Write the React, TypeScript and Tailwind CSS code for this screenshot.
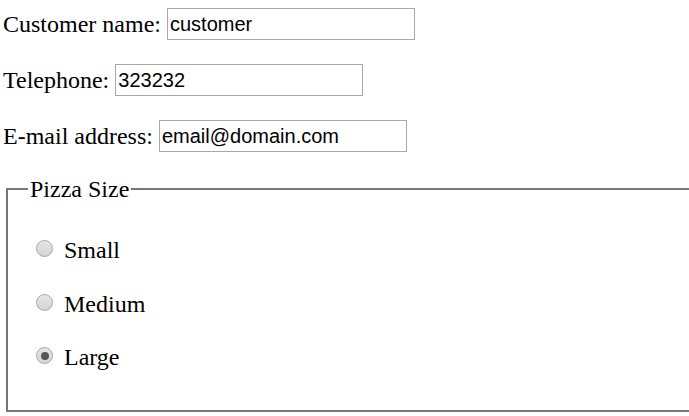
import React, {useState} from 'react'

type Size = 'Small' | 'Medium' | 'Large'

const Field: React.FC<{label: string; value: string}> = ({label, value}) => (
    <div className="flex h-8 items-center gap-[6px]">
        <span>{label}</span>
        <input
            type="text"
            defaultValue={value}
            className="h-8 w-[248px] border border-[#a9a9a9] px-[2px] text-[20px] text-black outline-none"
            style={{fontFamily: '"Liberation Sans", Arial, sans-serif'}}
        />
    </div>
)

const Radio: React.FC<{checked: boolean}> = ({checked}) => (
    <span className="flex h-[17px] w-[17px] items-center justify-center rounded-full border border-[#a8a8a8] bg-gradient-to-b from-[#e6e6e6] to-[#d4d4d4]">
        {checked && <span className="h-[8px] w-[8px] rounded-full bg-[#555]" />}
    </span>
)

const App: React.FC = () => {
    const [size, setSize] = useState<Size>('Large')
    const sizes: Size[] = ['Small', 'Medium', 'Large']

    return (
        <div
            className="h-[416px] w-[689px] overflow-hidden bg-white text-[24px] leading-[28px] text-black"
            style={{fontFamily: '"Liberation Serif", "Times New Roman", serif'}}
        >
            <div className="ml-[3px] flex flex-col gap-6 pt-2">
                <Field label="Customer name:" value="customer" />
                <Field label="Telephone:" value="323232" />
                <Field label="E-mail address:" value="email@domain.com" />
            </div>

            <fieldset className="ml-[6px] mt-[23px] h-[237px] w-[700px] border-2 border-[#777]">
                <legend className="ml-[20px] px-[2px]">Pizza Size</legend>
                <div className="mt-[33px] flex flex-col">
                    {sizes.map((s) => (
                        <label
                            key={s}
                            onClick={() => setSize(s)}
                            className="flex h-[53.5px] cursor-pointer items-start gap-[11px] pl-[28px]"
                        >
                            <span className="flex h-[25px] items-center">
                                <Radio checked={size === s} />
                            </span>
                            <span>{s}</span>
                        </label>
                    ))}
                </div>
            </fieldset>
        </div>
    )
}

export default App
